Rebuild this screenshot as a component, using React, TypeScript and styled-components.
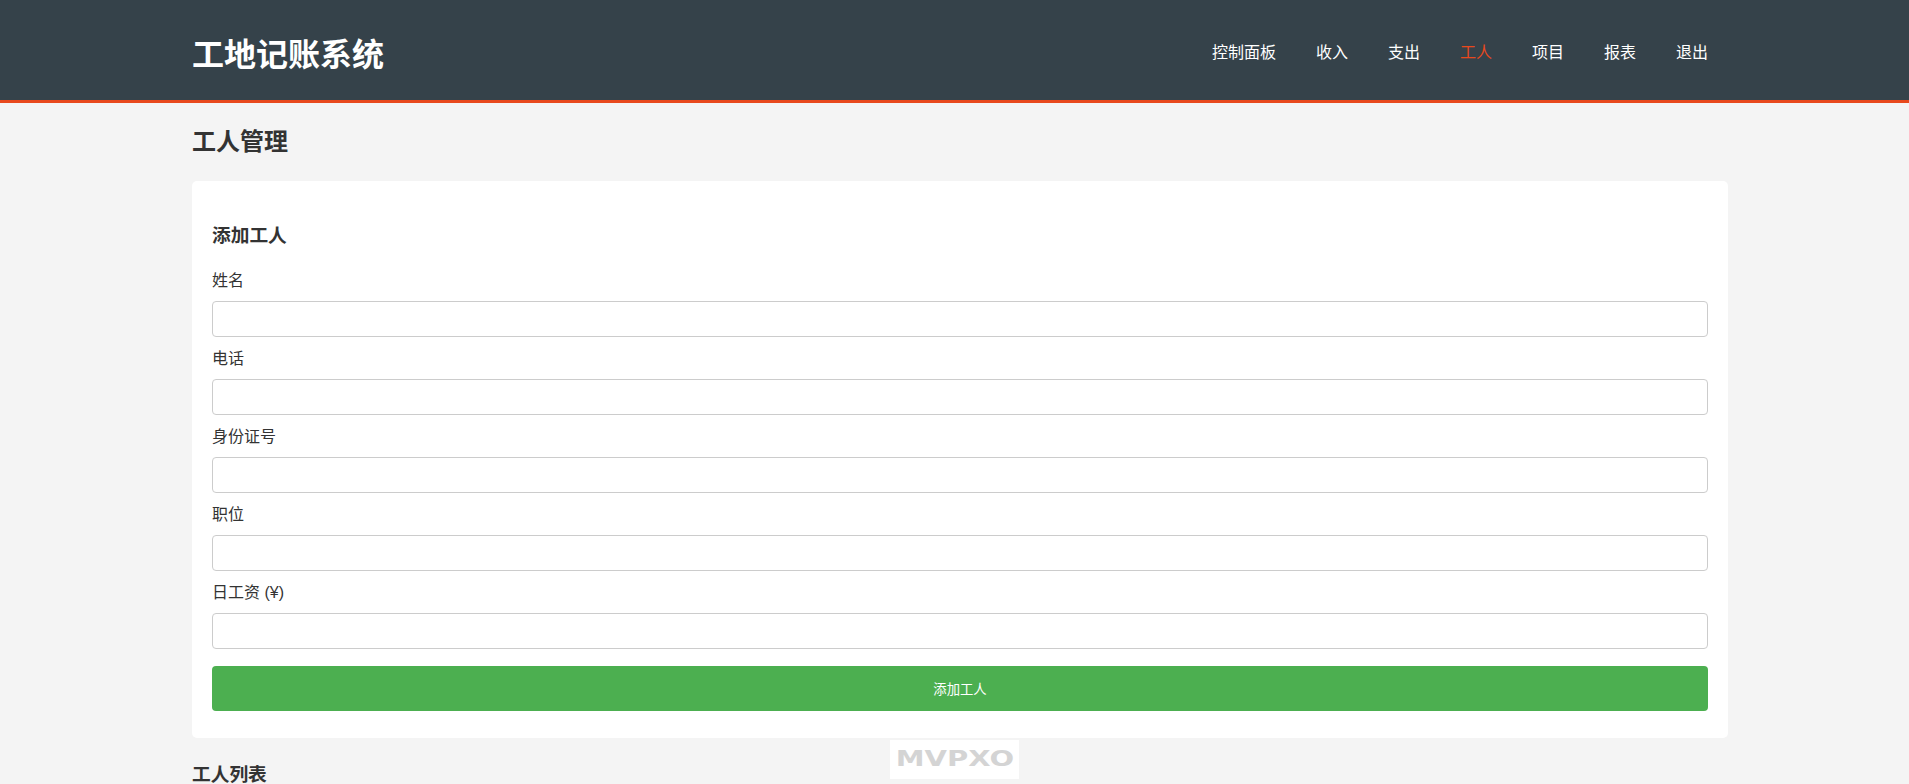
import React from 'react';
import styled, { createGlobalStyle } from 'styled-components';

const GlobalStyle = createGlobalStyle`
  html, body {
    margin: 0;
    padding: 0;
    background: #f4f4f4;
    font-family: "Liberation Sans", Arial, "Noto Sans CJK SC", sans-serif;
    color: #333;
  }
  * { box-sizing: border-box; }
`;

const navItems = ['控制面板', '收入', '支出', '工人', '项目', '报表', '退出'];
const fields = ['姓名', '电话', '身份证号', '职位', '日工资 (¥)'];

export default function App() {
  return (
    <>
      <GlobalStyle />
      <S.Header>
        <S.Container>
          <S.HeaderRow>
            <S.Brand>工地记账系统</S.Brand>
            <S.Nav>
              {navItems.map((item) => (
                <S.NavItem key={item} $active={item === '工人'}>
                  {item}
                </S.NavItem>
              ))}
            </S.Nav>
          </S.HeaderRow>
        </S.Container>
      </S.Header>
      <S.Container>
        <S.PageTitle>工人管理</S.PageTitle>
        <S.Card>
          <S.SectionTitle>添加工人</S.SectionTitle>
          <form onSubmit={(e) => e.preventDefault()}>
            {fields.map((f) => (
              <S.Field key={f}>
                <S.Label>{f}</S.Label>
                <S.Input type="text" />
              </S.Field>
            ))}
            <S.Button type="submit">添加工人</S.Button>
          </form>
        </S.Card>
        <S.SectionTitle $top={24}>工人列表</S.SectionTitle>
      </S.Container>
      <S.Watermark>
        <span>MVPXO</span>
      </S.Watermark>
    </>
  );
}

const S = {
  Header: styled.header`
    background: #35424a;
    border-bottom: 3px solid #e8491d;
    color: #fff;
  `,
  Container: styled.div`
    width: 1536px;
    margin: 0 0 0 192px;
  `,
  HeaderRow: styled.div`
    display: flex;
    justify-content: space-between;
    align-items: center;
    height: 100px;
  `,
  Brand: styled.h1`
    margin: 0;
    padding-top: 10px;
    font-size: 32px;
    line-height: 40px;
    font-weight: bold;
    color: #fff;
  `,
  Nav: styled.ul`
    display: flex;
    margin: 0;
    padding: 5px 0 0;
    list-style: none;
  `,
  NavItem: styled.li<{ $active?: boolean }>`
    padding: 0 20px;
    font-size: 16px;
    line-height: 20px;
    color: ${(p) => (p.$active ? '#e8491d' : '#fff')};
    cursor: pointer;
  `,
  PageTitle: styled.h2`
    margin: 24px 0;
    font-size: 24px;
    line-height: 30px;
    font-weight: bold;
    color: #333;
  `,
  Card: styled.div`
    background: #fff;
    border-radius: 5px;
    padding: 20px 20px 27px;
    display: flow-root;
  `,
  SectionTitle: styled.h3<{ $top?: number }>`
    margin: ${(p) => p.$top ?? 22}px 0 21px;
    font-size: 18.72px;
    line-height: 26px;
    font-weight: bold;
    color: #333;
  `,
  Field: styled.div`
    margin-bottom: 11px;
  `,
  Label: styled.label`
    display: block;
    margin-bottom: 10px;
    font-size: 16px;
    line-height: 21px;
    color: #333;
  `,
  Input: styled.input`
    display: block;
    width: 100%;
    height: 36px;
    padding: 8px;
    border: 1px solid #ccc;
    border-radius: 4px;
    background: #fff;
    font-size: 14px;
    font-family: inherit;
    outline: none;
  `,
  Button: styled.button`
    display: block;
    width: 100%;
    height: 45px;
    margin-top: 17px;
    border: none;
    border-radius: 4px;
    background: #4caf50;
    color: #fff;
    font-size: 13.33px;
    font-family: inherit;
    cursor: pointer;
  `,
  Watermark: styled.div`
    position: absolute;
    left: 890px;
    top: 740px;
    width: 129px;
    height: 39px;
    background: #fff;
    display: flex;
    align-items: center;
    justify-content: center;
    overflow: hidden;
    span {
      display: inline-block;
      font-family: "DejaVu Sans", sans-serif;
      font-weight: bold;
      font-size: 21px;
      line-height: 1;
      color: #d4d4d4;
      transform: scaleX(1.38);
    }
  `,
};
